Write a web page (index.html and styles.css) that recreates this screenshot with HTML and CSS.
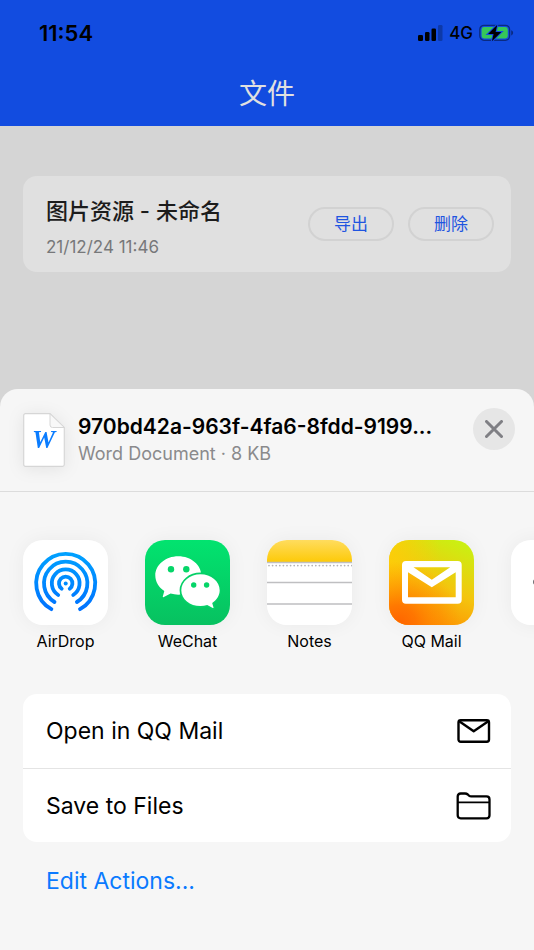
FILE: index.html
```html
<!DOCTYPE html>
<html lang="zh-CN">
<head>
    <meta charset="UTF-8">
    <meta name="viewport" content="width=device-width, initial-scale=1">
    <title>文件</title>
    <link rel="stylesheet" href="styles.css">
</head>
<body>
    <header class="topbar">
        <div class="status">
            <span class="time">11:54</span>
            <div class="status-icons">
                <svg class="signal" width="25" height="16" viewBox="0 0 25 16">
                    <rect x="0" y="10" width="5" height="6" rx="1.3"/>
                    <rect x="7" y="7" width="4.5" height="9" rx="1.3"/>
                    <rect x="13.5" y="3.5" width="4.5" height="12.5" rx="1.3"/>
                    <rect x="20" y="0" width="4.5" height="16" rx="1.3" opacity=".25"/>
                </svg>
                <span class="network">4G</span>
                <svg class="battery" width="35" height="18" viewBox="0 0 35 18">
                    <rect x=".8" y="1.3" width="29.8" height="15" rx="4.2" fill="none" stroke="#0a2a80" stroke-width="1.3"/>
                    <path d="M32.2 6.2c1.3 .4 1.9 1.4 1.9 2.6s-.6 2.2-1.9 2.6z" fill="#0a2a80"/>
                    <rect x="2.6" y="3.1" width="26.2" height="11.4" rx="2.4" fill="#35c759"/>
                    <path d="M18.3 .8 9 10h5.6l-1.7 7.2L22.3 8h-5.7z" fill="#000" stroke="#124ce0" stroke-width="2" paint-order="stroke"/>
                </svg>
            </div>
        </div>
        <h1>文件</h1>
    </header>

    <main class="files">
        <article class="file-card">
            <div class="file-info">
                <h2>图片资源 - 未命名</h2>
                <p>21/12/24 11:46</p>
            </div>
            <div class="file-buttons">
                <button type="button">导出</button>
                <button type="button">删除</button>
            </div>
        </article>
    </main>

    <!-- Share sheet -->
    <section class="sheet">
        <div class="sheet-header">
            <svg class="doc-icon" width="42" height="54" viewBox="0 0 42 54">
                <path d="M2.5 .7H27L41.3 14.5V51.5q0 1.8-1.8 1.8h-37Q.7 53.3 .7 51.5V2.5Q.7 .7 2.5 .7z" fill="#fff" stroke="#d6d6d6" stroke-width="1.2"/>
                <path d="M27 .7V12q0 2.5 2.5 2.5H41.3z" fill="#f8f8f8" stroke="#d6d6d6" stroke-width="1"/>
                <text class="doc-letter" x="20.5" y="35" text-anchor="middle">W</text>
            </svg>
            <div class="doc-info">
                <h3>970bd42a-963f-4fa6-8fdd-9199...</h3>
                <p>Word Document · 8 KB</p>
            </div>
            <button class="close" type="button" aria-label="Close">
                <svg width="18" height="18" viewBox="0 0 18 18">
                    <path d="M1.5 1.5l15 15M16.5 1.5l-15 15" stroke="#7f7f84" stroke-width="3" stroke-linecap="round"/>
                </svg>
            </button>
        </div>

        <div class="apps">
            <button class="app" type="button">
                <svg class="app-icon" viewBox="0 0 85 85">
                    <defs>
                        <linearGradient id="airdrop" gradientUnits="userSpaceOnUse" x1="0" y1="12" x2="0" y2="70">
                            <stop offset="0" stop-color="#00a2ff"/>
                            <stop offset="1" stop-color="#0072ff"/>
                        </linearGradient>
                    </defs>
                    <rect width="85" height="85" fill="#fff"/>
                    <g fill="none" stroke="url(#airdrop)" stroke-width="3.8" stroke-linecap="round">
                        <path d="M28.4 69.2A29.5 29.5 0 1 1 57 69.2"/>
                        <path d="M31.5 62A21.7 21.7 0 1 1 53.9 62"/>
                        <path d="M35.2 55A13.9 13.9 0 1 1 50.2 55"/>
                        <path d="M38.7 48.7A6.7 6.7 0 1 1 46.7 48.7"/>
                    </g>
                    <circle cx="42.7" cy="43.4" r="2" fill="#008cff"/>
                </svg>
                <span>AirDrop</span>
            </button>
            <button class="app" type="button">
                <svg class="app-icon" viewBox="0 0 85 85">
                    <defs>
                        <linearGradient id="wechat" x1="0" y1="0" x2="0" y2="1">
                            <stop offset="0" stop-color="#02e36f"/>
                            <stop offset="1" stop-color="#07c160"/>
                        </linearGradient>
                    </defs>
                    <rect width="85" height="85" fill="url(#wechat)"/>
                    <path d="M33.3 16.2c12.7 0 23 8.6 23 19.3s-10.3 19.2-23 19.2c-2.7 0-5.3-.4-7.7-1.1L18.4 57.3q-.8 .2-.6-.7l1.5-5.7c-5.5-3.5-9-9.1-9-15.4 0-10.7 10.3-19.3 23-19.3z" fill="#fff"/>
                    <path d="M55.5 34.3c10.6 0 19.2 7.1 19.2 15.9 0 5.2-3 9.8-7.5 12.7l1.3 4.6q.1 .8-.7 .5l-5.6-3c-2.1 .7-4.3 1.1-6.7 1.1-10.6 0-19.2-7.1-19.2-15.9s8.6-15.9 19.2-15.9z" fill="#fff" stroke="#05d067" stroke-width="3.4" paint-order="stroke"/>
                    <g fill="#05d568">
                        <circle cx="26" cy="29.3" r="3.2"/>
                        <circle cx="41.3" cy="29.3" r="3.2"/>
                        <circle cx="48.7" cy="45" r="2.7"/>
                        <circle cx="61.6" cy="45" r="2.7"/>
                    </g>
                </svg>
                <span>WeChat</span>
            </button>
            <button class="app" type="button">
                <svg class="app-icon" viewBox="0 0 85 85">
                    <defs>
                        <linearGradient id="notes" x1="0" y1="0" x2="0" y2="1">
                            <stop offset="0" stop-color="#ffdc5e"/>
                            <stop offset="1" stop-color="#fdca08"/>
                        </linearGradient>
                    </defs>
                    <rect width="85" height="85" fill="#fff"/>
                    <rect width="85" height="22" fill="url(#notes)"/>
                    <path d="M0 22.5h85M0 42.5h85M0 64h85" stroke="#bfbfc1" stroke-width="1.3"/>
                    <path d="M2 25.6h83" stroke="#b4b4b6" stroke-width="1.8" stroke-linecap="round" stroke-dasharray="0 3.6"/>
                </svg>
                <span>Notes</span>
            </button>
            <button class="app" type="button">
                <svg class="app-icon" viewBox="0 0 85 85">
                    <defs>
                        <linearGradient id="qqmail" x1=".3" y1="1" x2=".75" y2="0">
                            <stop offset="0" stop-color="#ff8a00"/>
                            <stop offset=".5" stop-color="#f4c50e"/>
                            <stop offset="1" stop-color="#cbef12"/>
                        </linearGradient>
                        <linearGradient id="qqmail-left" x1="0" y1="0" x2="1" y2="0">
                            <stop offset="0" stop-color="#ffce08" stop-opacity=".8"/>
                            <stop offset=".6" stop-color="#ffce08" stop-opacity="0"/>
                        </linearGradient>
                        <radialGradient id="qqmail-corner" cx=".1" cy="1" r=".75">
                            <stop offset="0" stop-color="#ff6200"/>
                            <stop offset=".3" stop-color="#ff7000" stop-opacity=".9"/>
                            <stop offset="1" stop-color="#ff9000" stop-opacity="0"/>
                        </radialGradient>
                    </defs>
                    <rect width="85" height="85" fill="url(#qqmail)"/>
                    <rect width="85" height="85" fill="url(#qqmail-left)"/>
                    <rect width="85" height="85" fill="url(#qqmail-corner)"/>
                    <path fill="#fff" fill-rule="evenodd" d="M17 21h51.7q4 0 4 4v34.7q0 4-4 4H17q-4 0-4-4V25q0-4 4-4zM24.5 27.2 42.8 39.8 61.2 27.2zM19 32.2V57.2H66.7V32.2L42.8 47.2z"/>
                </svg>
                <span>QQ Mail</span>
            </button>
            <button class="app" type="button" aria-label="More">
                <svg class="app-icon" viewBox="0 0 85 85">
                    <rect width="85" height="85" fill="#fff"/>
                    <g fill="#6b6b70">
                        <circle cx="25" cy="42" r="3"/>
                        <circle cx="42.5" cy="42" r="3"/>
                        <circle cx="60" cy="42" r="3"/>
                    </g>
                </svg>
            </button>
        </div>

        <div class="actions">
            <button class="action" type="button">
                <span>Open in QQ Mail</span>
                <svg width="36" height="28" viewBox="0 0 36 28">
                    <g fill="none" stroke="#000" stroke-width="2.4" stroke-linejoin="round">
                        <rect x="2.5" y="3.2" width="30.5" height="21.6" rx="2.2"/>
                        <path d="M3.2 4.2 17.7 14.2 32.3 4.2"/>
                    </g>
                </svg>
            </button>
            <button class="action" type="button">
                <span>Save to Files</span>
                <svg width="36" height="28" viewBox="0 0 36 28">
                    <g fill="none" stroke="#000" stroke-width="2.3" stroke-linejoin="round">
                        <path d="M1.7 10.5V4.5q0-3 3-3h4.3q1.6 0 2.8 1l1.2 1.1q1 .8 2.3 .8H30.5q3 0 3 3V23.3q0 3-3 3H4.7q-3 0-3-3z"/>
                        <path d="M1.7 10.3H33.5" stroke-width="1.8"/>
                    </g>
                </svg>
            </button>
        </div>

        <a class="edit" href="#">Edit Actions...</a>
    </section>
</body>
</html>
```

FILE: styles.css
```css
* {
    box-sizing: border-box;
}

body {
    margin: 0;
    min-height: 100vh;
    display: flex;
    flex-direction: column;
    background: #d5d5d5;
    color: #000;
    font-family: Inter, "Noto Sans CJK SC", sans-serif;
}

h1, h2, h3, p {
    margin: 0;
}

button {
    padding: 0;
    border: none;
    background: none;
    color: inherit;
    font-family: inherit;
    cursor: pointer;
}

svg {
    display: block;
    flex-shrink: 0;
}

.topbar {
    background: #124ce0;
    padding-bottom: 8px;
}

.status {
    display: flex;
    justify-content: space-between;
    align-items: center;
    height: 66px;
    padding: 0 20px 0 39px;
}

.time {
    font-size: 22px;
    font-weight: 600;
}

.status-icons {
    display: flex;
    align-items: center;
    gap: 6px;
}

.network {
    font-size: 17px;
    font-weight: 500;
}

h1 {
    padding-top: 4px;
    color: #e0e0e0;
    font-size: 28px;
    font-weight: 400;
    line-height: 48px;
    text-align: center;
}

.files {
    padding: 50px 23px;
}

.file-card {
    display: flex;
    justify-content: space-between;
    align-items: center;
    padding: 8px 17px 8px 23px;
    background: #e0e0e0;
    border-radius: 14px;
}

.file-info {
    padding-top: 8px;
}

.file-info h2 {
    color: #1c1c1c;
    font-size: 22px;
    font-weight: 500;
    line-height: 38px;
}

.file-info p {
    color: #77787a;
    font-size: 17px;
    line-height: 34px;
}

.file-buttons {
    display: flex;
    gap: 14px;
}

.file-buttons button {
    width: 86px;
    height: 34px;
    border: 2px solid #d2d2d2;
    border-radius: 17px;
    color: #1f55e0;
    font-size: 17px;
    line-height: 28px;
}

.sheet {
    margin-top: auto;
    padding-bottom: 52px;
    background: #f6f6f6;
    border-radius: 18px 18px 0 0;
}

.sheet-header {
    display: flex;
    align-items: center;
    gap: 13px;
    height: 103px;
    padding: 0 19px 0 23px;
    border-bottom: 1px solid #dcdcdc;
}

.doc-icon {
    filter: drop-shadow(0 2px 8px rgba(0, 0, 0, 0.08));
}

.doc-letter {
    fill: #0a7cff;
    font: italic bold 26px "Liberation Serif", serif;
}

.doc-info {
    flex: 1;
    min-width: 0;
}

.doc-info h3 {
    font-size: 21px;
    font-weight: 600;
    line-height: 28px;
    white-space: nowrap;
}

.doc-info p {
    color: #8a8a8c;
    font-size: 18px;
    line-height: 26px;
}

.close {
    display: flex;
    align-items: center;
    justify-content: center;
    flex-shrink: 0;
    width: 42px;
    height: 42px;
    margin-bottom: 22px;
    background: #e6e6e6;
    border-radius: 50%;
}

.apps {
    display: flex;
    gap: 37px;
    padding: 48px 23px 41px;
    overflow: hidden;
}

.app {
    display: flex;
    flex-direction: column;
    align-items: center;
    gap: 5px;
    flex: 0 0 85px;
    font-size: 16px;
    line-height: 23px;
    white-space: nowrap;
}

.app-icon {
    width: 85px;
    height: 85px;
    border-radius: 20px;
    box-shadow: 0 0 20px rgba(0, 0, 0, 0.05);
}

.actions {
    margin: 0 23px;
    background: #fff;
    border-radius: 14px;
}

.action {
    display: flex;
    justify-content: space-between;
    align-items: center;
    width: 100%;
    height: 74px;
    padding: 0 19px 0 23px;
    font-size: 23px;
}

.action + .action {
    border-top: 1px solid #e4e4e4;
}

.edit {
    display: block;
    margin: 22px 46px 0;
    color: #0a7aff;
    font-size: 23px;
    line-height: 34px;
    text-decoration: none;
}
```
